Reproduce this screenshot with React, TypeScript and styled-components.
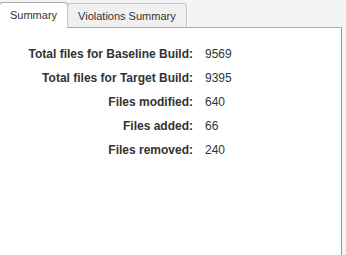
import { Fragment } from 'react';
import { createGlobalStyle, styled } from 'styled-components';

const GlobalStyle = createGlobalStyle`
  html, body {
    margin: 0;
    padding: 0;
    background: #f4f4f4;
    font-family: "Liberation Sans", Arial, Helvetica, sans-serif;
    color: #333;
    overflow: hidden;
  }
`;

const Root = styled.div`
  margin-left: -1px;
  width: 343px;
  height: 255px;
  display: flex;
  flex-direction: column;
`;

const TabList = styled.div`
  display: flex;
  align-items: flex-end;
  padding-top: 2px;
  margin-bottom: -1px;
  position: relative;
  z-index: 1;
`;

const Tab = styled.div<{ $active?: boolean }>`
  box-sizing: border-box;
  height: ${(p) => (p.$active ? 26 : 25)}px;
  padding: 0 10px;
  display: flex;
  align-items: center;
  font-size: 11px;
  color: #333;
  background: ${(p) => (p.$active ? '#fff' : '#f0f0f0')};
  border: 1px solid ${(p) => (p.$active ? '#aaa' : '#c6c6c6')};
  border-bottom-color: ${(p) => (p.$active ? '#fff' : '#aaa')};
  border-radius: 4px 4px 0 0;
  margin-left: ${(p) => (p.$active ? 0 : -1)}px;
  cursor: pointer;
`;

const Panel = styled.div`
  flex: 1;
  background: #fff;
  border: 1px solid #aaa;
  border-bottom: none;
  border-right-color: #999;
  padding-top: 14px;
`;

const Stats = styled.div`
  display: grid;
  grid-template-columns: 193px auto;
  column-gap: 12px;
  grid-auto-rows: 24px;
  align-items: center;
  font-size: 12px;
`;

const Label = styled.div`
  font-weight: bold;
  text-align: right;
  color: #333;
`;

const Value = styled.div`
  color: #333;
`;

const rows: [string, number][] = [
  ['Total files for Baseline Build:', 9569],
  ['Total files for Target Build:', 9395],
  ['Files modified:', 640],
  ['Files added:', 66],
  ['Files removed:', 240],
];

export default function App() {
  return (
    <>
      <GlobalStyle />
      <Root>
        <TabList>
          <Tab $active>Summary</Tab>
          <Tab>Violations Summary</Tab>
        </TabList>
        <Panel>
          <Stats>
            {rows.map(([label, value]) => (
              <Fragment key={label}>
                <Label>{label}</Label>
                <Value>{value}</Value>
              </Fragment>
            ))}
          </Stats>
        </Panel>
      </Root>
    </>
  );
}
